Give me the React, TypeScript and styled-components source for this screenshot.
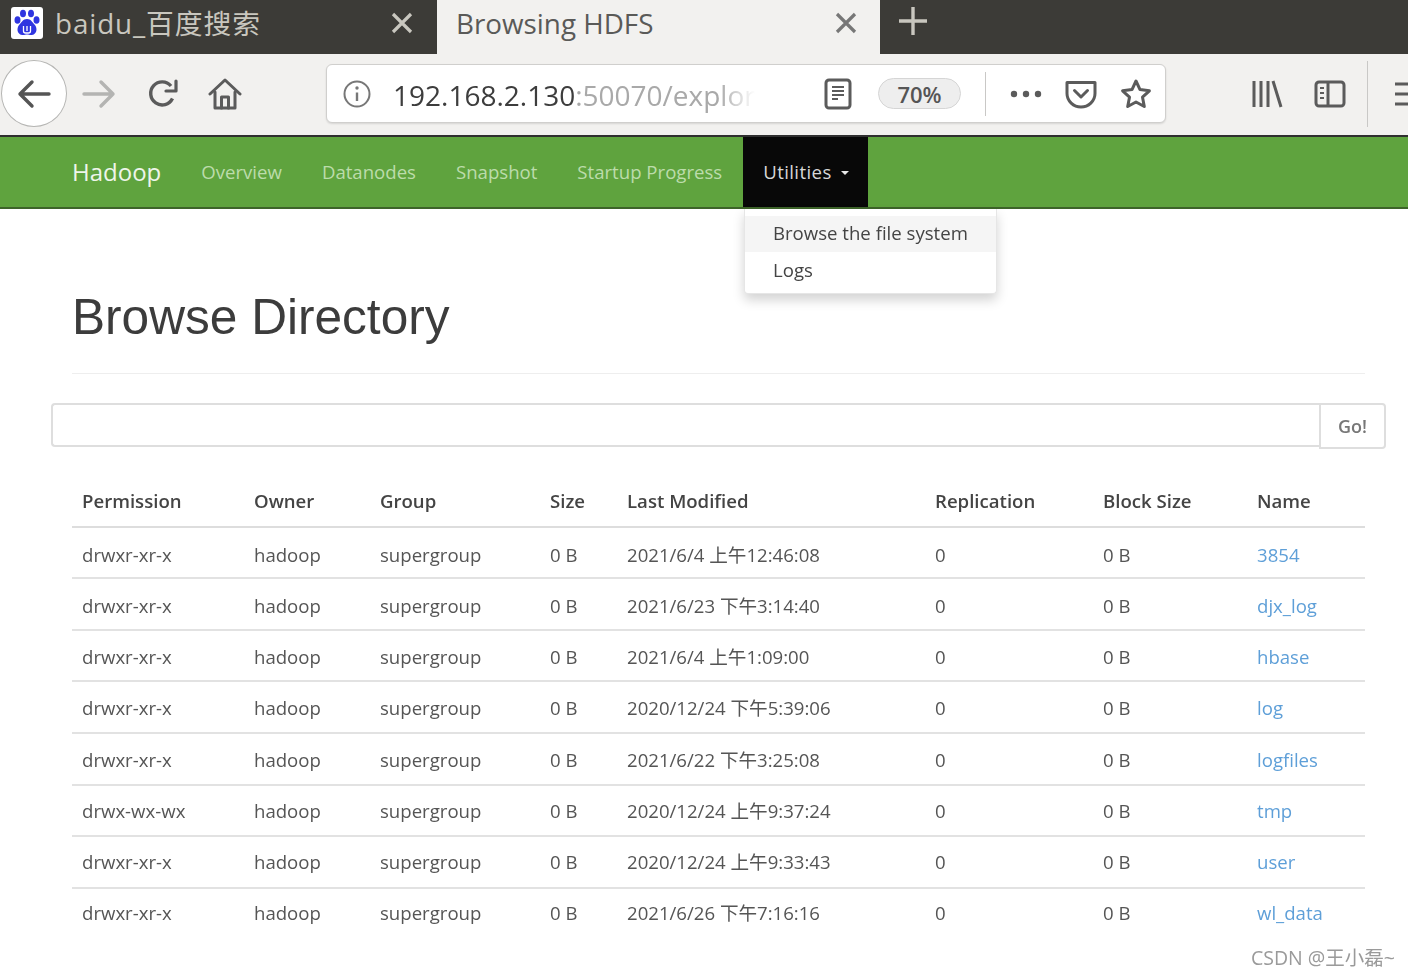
import React from "react";
import styled, { createGlobalStyle } from "styled-components";

const Global = createGlobalStyle`
  html, body { margin: 0; padding: 0; background: #fff; overflow: hidden; }
  body { font-family: "Open Sans", "Noto Sans CJK SC", sans-serif; }
`;

const Page = styled.div`
  position: relative;
  width: 1408px;
  height: 976px;
  overflow: hidden;
  filter: blur(0.7px);
`;

const TabBar = styled.div`
  display: flex;
  height: 54px;
  background: #3c3b37;
`;
const Tab = styled.div<{ $active?: boolean }>`
  display: flex;
  align-items: center;
  box-sizing: border-box;
  width: ${(p) => (p.$active ? 443 : 437)}px;
  padding: 0 0 9px ${(p) => (p.$active ? 19 : 11)}px;
  background: ${(p) => (p.$active ? "#f2f1ef" : "#3c3b37")};
  color: ${(p) => (p.$active ? "#5a5a58" : "#c9c7bf")};
`;
const TabTitle = styled.span`
  flex: 1;
  font-size: 27.800px;
  letter-spacing: 0.9px;
  line-height: 44px;
  margin-left: 12px;
  white-space: nowrap;
`;
const ActiveTitle = styled(TabTitle)`
  margin-left: 0;
  letter-spacing: 0;
`;
const TabClose = styled.span<{ $active?: boolean }>`
  display: flex;
  width: 24px;
  margin-right: ${(p) => (p.$active ? 22 : 23)}px;
  color: ${(p) => (p.$active ? "#777" : "#c9c7bf")};
`;
const NewTab = styled.span`
  display: flex;
  margin-left: 18px;
  margin-top: 6px;
  color: #c9c7bf;
  align-self: flex-start;
`;

const Toolbar = styled.div`
  display: flex;
  align-items: center;
  box-sizing: border-box;
  height: 83px;
  padding: 0 0 2px 1px;
  background: #f2f1ef;
  border-bottom: 2px solid #2f2f2f;
  color: #5b5b5b;
`;
const BackButton = styled.div`
  display: flex;
  align-items: center;
  justify-content: center;
  box-sizing: border-box;
  width: 66px;
  height: 67px;
  background: #fff;
  border: 1px solid #b5b5b3;
  border-radius: 50%;
  color: #555;
  flex: none;
`;
const ToolIcon = styled.span<{ $w: number; $faded?: boolean }>`
  display: flex;
  justify-content: center;
  flex: none;
  width: ${(p) => p.$w}px;
  color: ${(p) => (p.$faded ? "#b4b4b2" : "#5b5b5b")};
`;
const UrlBar = styled.div`
  display: flex;
  align-items: center;
  box-sizing: border-box;
  flex: none;
  width: 840px;
  height: 59px;
  margin-left: 71px;
  padding-left: 16px;
  background: #fff;
  border: 1px solid #d0cfcd;
  border-radius: 6px;
  box-shadow: 0 1px 2px rgba(0, 0, 0, 0.12);
`;
const InfoSlot = styled.span`
  display: flex;
  flex: none;
  color: #777;
`;
const UrlText = styled.div`
  flex: none;
  width: 362px;
  margin-left: 22px;
  padding-top: 2px;
  overflow: hidden;
  white-space: nowrap;
  font-size: 28px;
  line-height: 40px;
  color: #3d3d3d;
  -webkit-mask-image: linear-gradient(to right, #000 90%, transparent 100%);
  mask-image: linear-gradient(to right, #000 90%, transparent 100%);
`;
const UrlRest = styled.span`
  color: #a9a9a9;
`;
const ReaderSlot = styled(ToolIcon)`
  margin-left: 61px;
`;
const ZoomPill = styled.div`
  display: flex;
  align-items: center;
  justify-content: center;
  flex: none;
  box-sizing: border-box;
  width: 83px;
  height: 31px;
  margin-left: 18px;
  background: #eeeeee;
  border: 1px solid #d5d5d5;
  border-radius: 16px;
  font-size: 22px;
  font-weight: 600;
  color: #555;
`;
const Divider = styled.div<{ $h: number }>`
  flex: none;
  width: 1px;
  height: ${(p) => p.$h}px;
  background: #c9c8c6;
`;
const UrlDivider = styled(Divider)`
  margin-left: 24px;
`;
const SideDivider = styled(Divider)`
  margin-left: 6px;
`;
const Dots = styled(ToolIcon)`
  margin-left: 15px;
`;
const LibrarySlot = styled(ToolIcon)`
  margin-left: 69px;
`;
const MenuSlot = styled(ToolIcon)`
  margin-left: 26px;
  justify-content: flex-start;
`;

const NavBar = styled.nav`
  position: relative;
  display: flex;
  align-items: stretch;
  box-sizing: border-box;
  height: 72px;
  padding-left: 72px;
  background: #5fa33e;
  border-bottom: 2px solid #3d6429;
`;
const Brand = styled.div`
  display: flex;
  align-items: center;
  margin-right: 20px;
  padding-bottom: 2px;
  font-size: 24px;
  color: #eef5ea;
`;
const NavLink = styled.div<{ $open?: boolean }>`
  display: flex;
  align-items: center;
  margin-left: ${(p) => (p.$open ? 1 : 0)}px;
  padding: 0 ${(p) => (p.$open ? 19 : 20)}px 2px 20px;
  font-size: 18.600px;
  letter-spacing: ${(p) => (p.$open ? "0.4px" : "0")};
  color: ${(p) => (p.$open ? "#d8d8d8" : "#bcdcab")};
  background: ${(p) => (p.$open ? "#080808" : "transparent")};
`;
const Caret = styled.span`
  width: 0;
  height: 0;
  margin-left: 9px;
  margin-top: 3px;
  border-top: 4px solid #e8e8e8;
  border-left: 4px solid transparent;
  border-right: 4px solid transparent;
`;
const Dropdown = styled.div`
  position: absolute;
  top: 72px;
  left: 744px;
  box-sizing: border-box;
  width: 253px;
  height: 85px;
  padding-top: 7px;
  background: #fff;
  border: 1px solid #e6e6e6;
  border-top: 0;
  border-radius: 0 0 4px 4px;
  box-shadow: 0 6px 12px rgba(0, 0, 0, 0.175);
  z-index: 2;
`;
const DropItem = styled.div<{ $hover?: boolean }>`
  height: 36px;
  margin-bottom: 1px;
  padding-left: 28px;
  font-size: 18.600px;
  line-height: 33px;
  color: #444;
  background: ${(p) => (p.$hover ? "#f5f5f5" : "transparent")};
`;

const Content = styled.main`
  padding: 0 43px 0 72px;
`;
const Header = styled.div`
  padding: 76px 0 24px;
  border-bottom: 1px solid #eeeeee;
`;
const Title = styled.h1`
  margin: 0;
  font-family: "Liberation Sans", Arial, sans-serif;
  font-size: 49.600px;
  font-weight: 400;
  line-height: 64px;
  color: #3c3c3c;
`;
const SearchRow = styled.div`
  display: flex;
  align-items: flex-start;
  margin: 29px -21px 0 -21px;
`;
const SearchInput = styled.div`
  flex: 1;
  box-sizing: border-box;
  height: 44px;
  background: #fff;
  border: 2px solid #dedede;
  border-right: 0;
  border-radius: 4px 0 0 4px;
`;
const GoButton = styled.div`
  display: flex;
  align-items: center;
  justify-content: center;
  box-sizing: border-box;
  width: 67px;
  height: 46px;
  background: #fff;
  border: 2px solid #dedede;
  border-radius: 0 4px 4px 0;
  font-size: 18px;
  font-weight: 600;
  color: #777;
`;
const Table = styled.table`
  width: 1293px;
  margin-top: 28px;
  table-layout: fixed;
  border-collapse: collapse;
  font-size: 18.600px;
  line-height: 26px;
  color: #555;
`;
const Th = styled.th<{ $w: number }>`
  width: ${(p) => p.$w}px;
  height: 50px;
  padding: 0 0 2px 10px;
  box-sizing: border-box;
  text-align: left;
  font-weight: 600;
  color: #444;
  border-bottom: 2px solid #dddddd;
`;
const Td = styled.td<{ $h: number; $top: number; $last?: boolean }>`
  height: ${(p) => p.$h}px;
  padding: ${(p) => p.$top}px 0 0 10px;
  box-sizing: border-box;
  vertical-align: top;
  border-bottom: ${(p) => (p.$last ? "0" : "2px solid #e2e2e2")};
  white-space: nowrap;
`;
const NameLink = styled.a`
  color: #5e9fd8;
  text-decoration: none;
`;
const Watermark = styled.div`
  position: absolute;
  right: 13px;
  bottom: 5px;
  font-size: 19.500px;
  line-height: 26px;
  color: #9a9a9a;
`;

const strokeProps = {
  fill: "none",
  stroke: "currentColor",
  strokeWidth: 3,
  strokeLinecap: "round" as const,
  strokeLinejoin: "round" as const,
};

const Paw = () => (
  <svg width="32" height="32" viewBox="0 0 32 32">
    <rect width="32" height="32" rx="3" fill="#fff" />
    <g fill="#2f35e0">
      <ellipse cx="6.5" cy="13" rx="3" ry="3.8" />
      <ellipse cx="12" cy="6.5" rx="3" ry="3.8" />
      <ellipse cx="20" cy="6.5" rx="3" ry="3.8" />
      <ellipse cx="25.5" cy="13" rx="3" ry="3.8" />
      <path d="M16 12c4 0 5 3 7.500 5.500 3 3 3 9.500-2.500 10.500-2 .3-3.500-.5-5-.5s-3 .8-5 .5c-5.500-1-5.500-7.500-2.500-10.500C11 15 12 12 16 12z" />
    </g>
    <path d="M12.500 19v5c0 1.500 1 2 2 2h3c1 0 2-.5 2-2v-5M16 19v5" fill="none" stroke="#fff" strokeWidth="1.300" />
  </svg>
);
const CloseIcon = () => (
  <svg width="24" height="24" viewBox="0 0 24 24"><path d="M3 3l18 18M21 3L3 21" fill="none" stroke="currentColor" strokeWidth="3.200" /></svg>
);
const PlusIcon = () => (
  <svg width="30" height="30" viewBox="0 0 30 30"><path d="M15 1v28M1 15h28" fill="none" stroke="currentColor" strokeWidth="3.400" /></svg>
);
const ArrowIcon = ({ flip }: { flip?: boolean }) => (
  <svg width="34" height="30" viewBox="0 0 34 30">
    <path d={flip ? "M2 15h29M19 3l12 12-12 12" : "M32 15H3M15 3L3 15l12 12"} {...strokeProps} strokeWidth={3.400} />
  </svg>
);
const ReloadIcon = () => (
  <svg width="32" height="32" viewBox="0 0 32 32">
    <path d="M25.500 20.500A11.500 11.500 0 1 1 24 8" {...strokeProps} strokeWidth={3.400} strokeLinecap="butt" />
    <path d="M29 3v10H19" {...strokeProps} strokeWidth={3.200} />
  </svg>
);
const HomeIcon = () => (
  <svg width="34" height="34" viewBox="0 0 34 34">
    <path d="M2 17L17 3l15 14" {...strokeProps} />
    <path d="M7 15v16h20V15" {...strokeProps} />
    <path d="M13.500 31V20h7v11" {...strokeProps} />
  </svg>
);
const InfoIcon = () => (
  <svg width="28" height="28" viewBox="0 0 28 28">
    <circle cx="14" cy="14" r="12.500" fill="none" stroke="currentColor" strokeWidth="2" />
    <path d="M14 12.500V21" stroke="currentColor" strokeWidth="2.400" />
    <circle cx="14" cy="8" r="1.700" fill="currentColor" />
  </svg>
);
const ReaderIcon = () => (
  <svg width="28" height="32" viewBox="0 0 28 32">
    <rect x="2" y="2" width="24" height="28" rx="3" fill="none" stroke="currentColor" strokeWidth="3" />
    <path d="M8 9h12M8 13h12M8 17h12M8 21h6" stroke="currentColor" strokeWidth="1.800" />
  </svg>
);
const DotsIcon = () => (
  <svg width="34" height="10" viewBox="0 0 34 10">
    <circle cx="5" cy="5" r="3.200" fill="currentColor" />
    <circle cx="17" cy="5" r="3.200" fill="currentColor" />
    <circle cx="29" cy="5" r="3.200" fill="currentColor" />
  </svg>
);
const PocketIcon = () => (
  <svg width="32" height="30" viewBox="0 0 32 30">
    <path d="M2 3.500h28v11C30 22 23.500 28 16 28S2 22 2 14.500z" {...strokeProps} />
    <path d="M9.500 11.500L16 18l6.500-6.500" {...strokeProps} />
  </svg>
);
const StarIcon = () => (
  <svg width="32" height="32" viewBox="0 0 32 32">
    <path d="M16 3l4 8.600 9.400 1.200-6.900 6.400 1.800 9.300L16 24l-8.300 4.500 1.800-9.300-6.900-6.400 9.400-1.200z" {...strokeProps} />
  </svg>
);
const LibraryIcon = () => (
  <svg width="32" height="30" viewBox="0 0 32 30">
    <path d="M3 2v26M10 2v26M17 2v26M22 2l8 26" fill="none" stroke="currentColor" strokeWidth="3" />
  </svg>
);
const SidebarIcon = () => (
  <svg width="32" height="28" viewBox="0 0 32 28">
    <rect x="2" y="2" width="28" height="24" rx="3" fill="none" stroke="currentColor" strokeWidth="3" />
    <path d="M14 2v24" stroke="currentColor" strokeWidth="3" />
    <path d="M6 8h4M6 13h4M6 18h4" stroke="currentColor" strokeWidth="2" />
  </svg>
);
const MenuIcon = () => (
  <svg width="28" height="26" viewBox="0 0 28 26">
    <path d="M1 3h26M1 13h26M1 23h26" stroke="currentColor" strokeWidth="3" />
  </svg>
);

const cols = [
  ["Permission", 172],
  ["Owner", 126],
  ["Group", 170],
  ["Size", 77],
  ["Last Modified", 308],
  ["Replication", 168],
  ["Block Size", 154],
  ["Name", 118],
] as const;

const rows = [
  { perm: "drwxr-xr-x", date: "2021/6/4 上午12:46:08", name: "3854", h: 51, top: 14 },
  { perm: "drwxr-xr-x", date: "2021/6/23 下午3:14:40", name: "djx_log", h: 52, top: 14 },
  { perm: "drwxr-xr-x", date: "2021/6/4 上午1:09:00", name: "hbase", h: 51, top: 13 },
  { perm: "drwxr-xr-x", date: "2020/12/24 下午5:39:06", name: "log", h: 52, top: 13 },
  { perm: "drwxr-xr-x", date: "2021/6/22 下午3:25:08", name: "logfiles", h: 52, top: 13 },
  { perm: "drwx-wx-wx", date: "2020/12/24 上午9:37:24", name: "tmp", h: 51, top: 12 },
  { perm: "drwxr-xr-x", date: "2020/12/24 上午9:33:43", name: "user", h: 52, top: 12 },
  { perm: "drwxr-xr-x", date: "2021/6/26 下午7:16:16", name: "wl_data", h: 52, top: 11 },
];

export default function App() {
  return (
    <Page>
      <Global />
      <TabBar>
        <Tab>
          <Paw />
          <TabTitle>baidu_百度搜索</TabTitle>
          <TabClose><CloseIcon /></TabClose>
        </Tab>
        <Tab $active>
          <ActiveTitle>Browsing HDFS</ActiveTitle>
          <TabClose $active><CloseIcon /></TabClose>
        </Tab>
        <NewTab><PlusIcon /></NewTab>
      </TabBar>
      <Toolbar>
        <BackButton><ArrowIcon /></BackButton>
        <ToolIcon $w={64} $faded><ArrowIcon flip /></ToolIcon>
        <ToolIcon $w={64}><ReloadIcon /></ToolIcon>
        <ToolIcon $w={60}><HomeIcon /></ToolIcon>
        <UrlBar>
          <InfoSlot><InfoIcon /></InfoSlot>
          <UrlText>192.168.2.130<UrlRest>:50070/explor</UrlRest></UrlText>
          <ReaderSlot $w={44}><ReaderIcon /></ReaderSlot>
          <ZoomPill>70%</ZoomPill>
          <UrlDivider $h={44} />
          <Dots $w={50}><DotsIcon /></Dots>
          <ToolIcon $w={60}><PocketIcon /></ToolIcon>
          <ToolIcon $w={50}><StarIcon /></ToolIcon>
        </UrlBar>
        <LibrarySlot $w={64}><LibraryIcon /></LibrarySlot>
        <ToolIcon $w={62}><SidebarIcon /></ToolIcon>
        <SideDivider $h={66} />
        <MenuSlot $w={28}><MenuIcon /></MenuSlot>
      </Toolbar>
      <NavBar>
        <Brand>Hadoop</Brand>
        <NavLink>Overview</NavLink>
        <NavLink>Datanodes</NavLink>
        <NavLink>Snapshot</NavLink>
        <NavLink>Startup Progress</NavLink>
        <NavLink $open>Utilities<Caret /></NavLink>
        <Dropdown>
          <DropItem $hover>Browse the file system</DropItem>
          <DropItem>Logs</DropItem>
        </Dropdown>
      </NavBar>
      <Content>
        <Header><Title>Browse Directory</Title></Header>
        <SearchRow>
          <SearchInput />
          <GoButton>Go!</GoButton>
        </SearchRow>
        <Table>
          <thead>
            <tr>{cols.map(([c, w]) => <Th key={c} $w={w}>{c}</Th>)}</tr>
          </thead>
          <tbody>
            {rows.map((r, i) => {
              const last = i === rows.length - 1;
              const cell = { $h: r.h, $top: r.top, $last: last };
              return (
                <tr key={r.name}>
                  <Td {...cell}>{r.perm}</Td>
                  <Td {...cell}>hadoop</Td>
                  <Td {...cell}>supergroup</Td>
                  <Td {...cell}>0 B</Td>
                  <Td {...cell}>{r.date}</Td>
                  <Td {...cell}>0</Td>
                  <Td {...cell}>0 B</Td>
                  <Td {...cell}><NameLink href="#">{r.name}</NameLink></Td>
                </tr>
              );
            })}
          </tbody>
        </Table>
      </Content>
      <Watermark>CSDN @王小磊~</Watermark>
    </Page>
  );
}
